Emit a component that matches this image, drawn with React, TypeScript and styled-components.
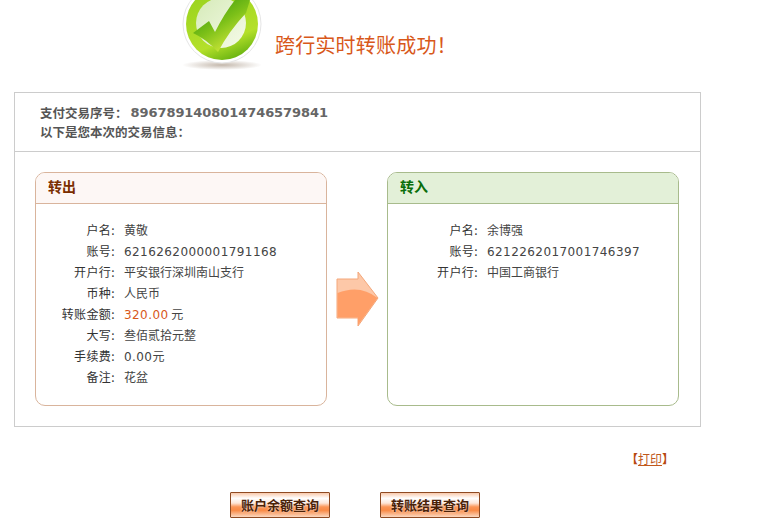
import React from 'react';
import styled, { createGlobalStyle } from 'styled-components';

const GlobalStyle = createGlobalStyle`
  html, body {
    margin: 0;
    padding: 0;
    background: #fff;
    font-family: "DejaVu Sans", "Noto Sans CJK SC", sans-serif;
    font-size: 12px;
    color: #333;
  }
`;

const Page = styled.div`
  width: 764px;
  height: 525px;
  overflow: hidden;
`;

const Banner = styled.header`
  height: 92px;
  display: flex;
  align-items: flex-start;
  padding-left: 182px;
  box-sizing: border-box;
`;

const Title = styled.h1`
  margin: 31px 0 0 11px;
  font-family: "Noto Sans CJK SC", sans-serif;
  font-size: 20px;
  line-height: 28px;
  font-weight: 400;
  color: #d8581a;
  letter-spacing: 0.2px;
`;

const Box = styled.section`
  width: 687px;
  height: 335px;
  margin-left: 14px;
  box-sizing: border-box;
  border: 1px solid #cccccc;
`;

const Summary = styled.div`
  height: 59px;
  box-sizing: border-box;
  padding: 10px 0 0 25px;
  border-bottom: 1px solid #cccccc;
`;

const SummaryLine = styled.div`
  display: flex;
  align-items: center;
  height: 19px;
`;

const SummaryCn = styled.span`
  font-family: "Noto Sans CJK SC", sans-serif;
  font-size: 12.5px;
  font-weight: 700;
  color: #555;
`;

const SerialNo = styled.span`
  margin-left: 3px;
  font-size: 13px;
  font-weight: 700;
  letter-spacing: -0.07px;
  color: #666;
`;

const Panels = styled.div`
  display: flex;
  align-items: flex-start;
  padding: 20px 0 0 20px;
`;

const Panel = styled.div<{ $line: string }>`
  width: 292px;
  height: 234px;
  box-sizing: border-box;
  border: 1px solid ${(p) => p.$line};
  border-radius: 10px;
  overflow: hidden;
`;

const PanelHead = styled.div<{ $bg: string; $line: string; $ink: string }>`
  height: 31px;
  box-sizing: border-box;
  padding-left: 12px;
  background: ${(p) => p.$bg};
  border-bottom: 1px solid ${(p) => p.$line};
  color: ${(p) => p.$ink};
  font-family: "Noto Sans CJK SC", sans-serif;
  font-size: 14px;
  font-weight: 700;
  line-height: 26px;
`;

const Rows = styled.dl<{ $labelWidth: number }>`
  display: grid;
  grid-template-columns: ${(p) => p.$labelWidth}px 1fr;
  column-gap: 9px;
  grid-auto-rows: 21px;
  margin: 15px 0 0;
  align-items: center;
`;

const Label = styled.dt`
  text-align: right;
  font-family: "Noto Sans CJK SC", sans-serif;
  font-size: 12px;
  letter-spacing: 0.4px;
  color: #333;
`;

const Value = styled.dd`
  margin: 0;
  font-family: "Noto Sans CJK SC", sans-serif;
  font-size: 12px;
  color: #444;
  white-space: nowrap;
`;

const Num = styled.span<{ $accent?: boolean }>`
  font-family: "DejaVu Sans", sans-serif;
  letter-spacing: 0.42px;
  color: ${(p) => (p.$accent ? '#d8581a' : '#444')};
`;

const ArrowSlot = styled.div`
  width: 60px;
  height: 234px;
  display: flex;
  align-items: center;
  padding: 20px 0 0 9px;
  box-sizing: border-box;
`;

const PrintRow = styled.div`
  display: flex;
  justify-content: flex-end;
  width: 674px;
  margin-top: 23px;
  font-family: "Noto Sans CJK SC", sans-serif;
  font-size: 12px;
  line-height: 18px;
  font-weight: 700;
  color: #b8480f;
`;

const PrintLink = styled.a`
  color: #c0581c;
  font-weight: 400;
  text-decoration: underline;
`;

const Actions = styled.div`
  display: flex;
  gap: 50px;
  margin: 24px 0 0 230px;
`;

const ActionButton = styled.button`
  width: 100px;
  height: 26px;
  padding: 0;
  box-sizing: border-box;
  border: 1px solid #8f4a22;
  border-radius: 1px;
  background: linear-gradient(#f9c9ab 0%, #fff 22%, #fde6d8 42%, #fb9556 58%, #f98a45 72%, #fcd9c2 100%);
  color: #4a2208;
  font-family: "Noto Sans CJK SC", sans-serif;
  font-size: 13px;
  font-weight: 700;
  line-height: 24px;
  text-shadow: 0 0 2px #fff;
`;

function CheckLogo() {
  return (
    <svg width="82" height="72" viewBox="0 0 82 72">
      <defs>
        <linearGradient id="ring" x1="0.2" y1="0" x2="0.6" y2="1">
          <stop offset="0" stopColor="#98d21e" />
          <stop offset="0.75" stopColor="#b4e02a" />
          <stop offset="1" stopColor="#6cb512" />
        </linearGradient>
        <linearGradient id="well" x1="0" y1="0" x2="1" y2="1">
          <stop offset="0" stopColor="#d5eab8" />
          <stop offset="1" stopColor="#f6fbe9" />
        </linearGradient>
        <linearGradient id="tick" x1="0.1" y1="0.2" x2="0.6" y2="0.9">
          <stop offset="0" stopColor="#45a010" />
          <stop offset="0.5" stopColor="#7cc018" />
          <stop offset="1" stopColor="#c4e236" />
        </linearGradient>
        <radialGradient id="shadow">
          <stop offset="0" stopColor="#a98" stopOpacity="0.7" />
          <stop offset="1" stopColor="#a98" stopOpacity="0" />
        </radialGradient>
      </defs>
      <ellipse cx="40" cy="65" rx="40" ry="5" fill="url(#shadow)" />
      <circle cx="40" cy="24" r="39" fill="#fff" stroke="#e6e6e6" />
      <circle cx="40" cy="24" r="36" fill="url(#ring)" />
      <circle cx="39" cy="23" r="25" fill="url(#well)" />
      <path d="M11 33 L27 21 L33 32 Q42 14 53 0 L68 0 L64 13 Q47 31 36 52 Q24 39 11 33Z" fill="url(#tick)" />
    </svg>
  );
}

function BigArrow() {
  return (
    <svg width="44" height="56" viewBox="0 0 44 56">
      <path d="M1 8 H22 V1 L42 27 L22 55 V47 H1Z" fill="#fdc8a8" stroke="#f4a77a" />
      <path d="M1.500 22 Q24 13 41.500 27 L22 54 V46.500 H1.500Z" fill="#ff9f68" />
    </svg>
  );
}

const outRows: [string, React.ReactNode][] = [
  ['户名:', '黄敬'],
  ['账号:', <Num>6216262000001791168</Num>],
  ['开户行:', '平安银行深圳南山支行'],
  ['币种:', '人民币'],
  ['转账金额:', <><Num $accent>320.00</Num> 元</>],
  ['大写:', '叁佰贰拾元整'],
  ['手续费:', <><Num>0.00</Num>元</>],
  ['备注:', '花盆'],
];

const inRows: [string, React.ReactNode][] = [
  ['户名:', '余博强'],
  ['账号:', <Num>6212262017001746397</Num>],
  ['开户行:', '中国工商银行'],
];

function InfoRows({ rows, labelWidth }: { rows: [string, React.ReactNode][]; labelWidth: number }) {
  return (
    <Rows $labelWidth={labelWidth}>
      {rows.map(([label, value]) => (
        <React.Fragment key={label}>
          <Label>{label}</Label>
          <Value>{value}</Value>
        </React.Fragment>
      ))}
    </Rows>
  );
}

export default function App() {
  return (
    <Page>
      <GlobalStyle />
      <Banner>
        <CheckLogo />
        <Title>跨行实时转账成功！</Title>
      </Banner>
      <Box>
        <Summary>
          <SummaryLine>
            <SummaryCn>支付交易序号：</SummaryCn>
            <SerialNo>8967891408014746579841</SerialNo>
          </SummaryLine>
          <SummaryLine>
            <SummaryCn>以下是您本次的交易信息：</SummaryCn>
          </SummaryLine>
        </Summary>
        <Panels>
          <Panel $line="#d9b49c">
            <PanelHead $bg="#fdf7f5" $line="#d9b49c" $ink="#7a2e00">
              转出
            </PanelHead>
            <InfoRows rows={outRows} labelWidth={79} />
          </Panel>
          <ArrowSlot>
            <BigArrow />
          </ArrowSlot>
          <Panel $line="#a8bb8c">
            <PanelHead $bg="#e3f0d8" $line="#a8bb8c" $ink="#0a6e0a">
              转入
            </PanelHead>
            <InfoRows rows={inRows} labelWidth={90} />
          </Panel>
        </Panels>
      </Box>
      <PrintRow>
        【<PrintLink>打印</PrintLink>】
      </PrintRow>
      <Actions>
        <ActionButton>账户余额查询</ActionButton>
        <ActionButton>转账结果查询</ActionButton>
      </Actions>
    </Page>
  );
}
